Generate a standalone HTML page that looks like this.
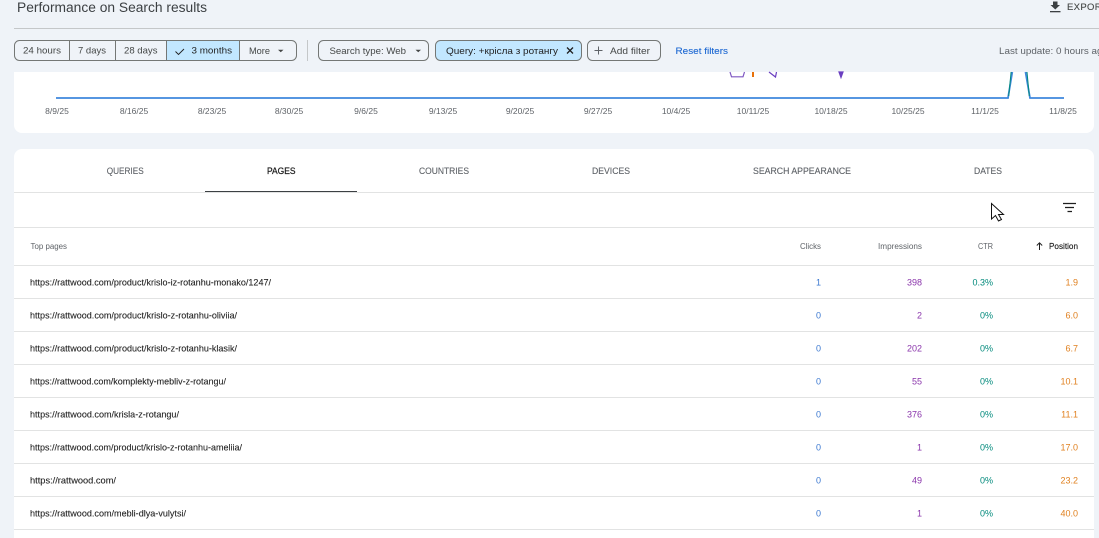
<!DOCTYPE html>
<html lang="en">
<head>
<meta charset="utf-8">
<title>Performance on Search results</title>
<style>
html,body{margin:0;padding:0;width:1099px;height:538px;overflow:hidden;background:#eff3f8}
svg{display:block}
text{font-family:"Liberation Sans","Noto Sans CJK SC",sans-serif}
.b{font-size:9.5px;fill:#444746}
.d{font-size:8.5px;fill:#5f6368;text-anchor:middle}
.t{font-size:8.8px;fill:#5f6368;stroke:#5f6368;stroke-width:.12}
.u{font-size:9.5px;fill:#1f1f1f;stroke:#1f1f1f;stroke-width:.1}
.h{font-size:8px;fill:#5f6368}
.c{font-size:9px;fill:#3b78d0;text-anchor:end}
.i{font-size:9px;fill:#8a35ab;text-anchor:end}
.r{font-size:9px;fill:#00897b;text-anchor:end}
.p{font-size:9px;fill:#e0801f;text-anchor:end}
.l{stroke:#e2e3e3;stroke-width:1}
</style>
</head>
<body>
<svg width="1099" height="538" viewBox="0 0 1099 538" xmlns="http://www.w3.org/2000/svg">
<rect width="1099" height="538" fill="#eff3f8"/>

<!-- header -->
<text x="17" y="12" font-size="13.5" fill="#3c4043" textLength="190" lengthAdjust="spacingAndGlyphs">Performance on Search results</text>
<path d="M1053 1.500h4.500v3.500h2.500l-4.750 4.500-4.750-4.500h2.500z" fill="#3c4043"/>
<rect x="1050" y="11" width="10.500" height="1.300" fill="#3c4043"/>
<text x="1067" y="10" font-size="9.500" fill="#444746" letter-spacing=".35" stroke="#444746" stroke-width=".12">EXPORT</text>
<rect x="14" y="28" width="1085" height="1" fill="#c4c7c9"/>

<!-- date range group -->
<path d="M167 40.500h72.500v20H167z" fill="#c2e7ff"/>
<rect x="14.500" y="40.500" width="282" height="20" rx="5" fill="none" stroke="#747775"/>
<path d="M69.500 40.500v20M115.500 40.500v20M166.500 40.500v20M239.500 40.500v20" stroke="#747775" fill="none"/>
<text class="b" x="23" y="53.500" textLength="38" lengthAdjust="spacingAndGlyphs">24 hours</text>
<text class="b" x="78" y="53.500" textLength="28" lengthAdjust="spacingAndGlyphs">7 days</text>
<text class="b" x="124" y="53.500" textLength="33.500" lengthAdjust="spacingAndGlyphs">28 days</text>
<path d="M175.500 51.500l3 3 5.500-5.500" fill="none" stroke="#1f1f1f" stroke-width=".9"/>
<text class="b" x="191.500" y="53.500" textLength="40.500" lengthAdjust="spacingAndGlyphs" style="fill:#1f1f1f">3 months</text>
<text class="b" x="249" y="54" textLength="21" lengthAdjust="spacingAndGlyphs">More</text>
<path d="M278 49.700h5.500l-2.750 2.500z" fill="#444746"/>

<rect x="307" y="40" width="1" height="21" fill="#c4c7c9"/>

<!-- filters -->
<rect x="318.500" y="40.500" width="110" height="20" rx="5" fill="none" stroke="#747775"/>
<text class="b" x="329.500" y="54" textLength="76.500" lengthAdjust="spacingAndGlyphs">Search type: Web</text>
<path d="M415.500 49.700h5.500l-2.750 2.500z" fill="#444746"/>

<rect x="435.500" y="40.500" width="146" height="20" rx="5" fill="#c2e7ff" stroke="#747775"/>
<text class="b" x="446" y="54" textLength="112" lengthAdjust="spacingAndGlyphs" style="fill:#1f1f1f">Query: +крісла з ротангу</text>
<path d="M567 47.500l6 6M573 47.500l-6 6" stroke="#1f1f1f" stroke-width="1.300" fill="none"/>

<rect x="587.500" y="40.500" width="73" height="20" rx="5" fill="none" stroke="#747775"/>
<path d="M598.500 46.500v8M594.500 50.500h8" stroke="#5f6368" stroke-width="1" fill="none"/>
<text class="b" x="610" y="54" textLength="40" lengthAdjust="spacingAndGlyphs">Add filter</text>
<text x="675.500" y="54" font-size="9.500" fill="#1a66d2" stroke="#1a66d2" stroke-width=".1" textLength="52.500" lengthAdjust="spacingAndGlyphs">Reset filters</text>
<text x="999" y="54" font-size="9.500" fill="#5f6368" textLength="109" lengthAdjust="spacingAndGlyphs">Last update: 0 hours ago</text>

<!-- chart card -->
<path d="M14 72H1094V125a8 8 0 0 1-8 8H22a8 8 0 0 1-8-8z" fill="#fff"/>
<g fill="none" stroke-width="1.200">
<path d="M730 72l1.500 4.800h11.500l1.500-4.800" stroke="#7e57c2"/>
<path d="M769 72l6.500 5 1-5" stroke="#6a3fc0"/>
<path d="M839 72l2 5.500 2-5.500z" stroke="#6a3fc0" fill="#6a3fc0"/>
</g>
<rect x="752" y="72" width="2" height="5" fill="#e8710a"/>
<path d="M56 98H1008l4.300-26M1025.500 72l4.500 26H1064" fill="none" stroke="#3f88dd" stroke-width="1.800"/>
<path d="M1008.700 96l2.400-24M1027 72l2.300 24" fill="none" stroke="#00897b" stroke-width="1"/>
<g class="dates">
<text class="d" x="57" y="114">8/9/25</text>
<text class="d" x="134" y="114">8/16/25</text>
<text class="d" x="212" y="114">8/23/25</text>
<text class="d" x="289" y="114">8/30/25</text>
<text class="d" x="366" y="114">9/6/25</text>
<text class="d" x="443" y="114">9/13/25</text>
<text class="d" x="520" y="114">9/20/25</text>
<text class="d" x="598" y="114">9/27/25</text>
<text class="d" x="676" y="114">10/4/25</text>
<text class="d" x="753" y="114">10/11/25</text>
<text class="d" x="831" y="114">10/18/25</text>
<text class="d" x="908" y="114">10/25/25</text>
<text class="d" x="985" y="114">11/1/25</text>
<text class="d" x="1063" y="114">11/8/25</text>
</g>

<!-- table card -->
<path d="M14 157a8 8 0 0 1 8-8H1086a8 8 0 0 1 8 8V538H14z" fill="#fff"/>

<text class="t" x="106.700" y="174" textLength="37" lengthAdjust="spacingAndGlyphs">QUERIES</text>
<text class="t" x="267" y="174" textLength="28.500" lengthAdjust="spacingAndGlyphs" style="fill:#1f1f1f;stroke:#1f1f1f;stroke-width:.25">PAGES</text>
<text class="t" x="419" y="174" textLength="50" lengthAdjust="spacingAndGlyphs">COUNTRIES</text>
<text class="t" x="592" y="174" textLength="38" lengthAdjust="spacingAndGlyphs">DEVICES</text>
<text class="t" x="753" y="174" textLength="98" lengthAdjust="spacingAndGlyphs">SEARCH APPEARANCE</text>
<text class="t" x="974" y="174" textLength="28" lengthAdjust="spacingAndGlyphs">DATES</text>

<path class="l" d="M14 192.500H1094M14 227.500H1094M14 265.500H1094M14 298.500H1094M14 331.500H1094M14 364.500H1094M14 397.500H1094M14 430.500H1094M14 463.500H1094M14 496.500H1094M14 529.500H1094"/>
<rect x="205" y="191" width="152" height="1" fill="#3c4043"/>

<!-- toolbar icons -->
<path d="M1063 203.500h13M1065 207.500h9M1067.500 211.500h4.500" stroke="#1f1f1f" stroke-width="1.300" fill="none"/>
<path d="M991.500 203.500V219l4-3.500 3 5.500 3-1.500-3-5h5z" fill="#fff" stroke="#111" stroke-width="1"/>

<!-- table head -->
<text class="h" x="30.500" y="249" textLength="36.500" lengthAdjust="spacingAndGlyphs">Top pages</text>
<text class="h" x="800" y="249" textLength="21" lengthAdjust="spacingAndGlyphs">Clicks</text>
<text class="h" x="878" y="249" textLength="44" lengthAdjust="spacingAndGlyphs">Impressions</text>
<text class="h" x="978" y="249" textLength="15" lengthAdjust="spacingAndGlyphs">CTR</text>
<path d="M1039.500 250v-7M1036.800 245.500l2.700-2.700 2.700 2.700" fill="none" stroke="#1f1f1f" stroke-width="1"/>
<text class="h" x="1049" y="249" textLength="29" lengthAdjust="spacingAndGlyphs" style="fill:#1f1f1f;stroke:#1f1f1f;stroke-width:.15">Position</text>

<!-- rows -->
<text class="u" x="30" y="285.500" textLength="241" lengthAdjust="spacingAndGlyphs">https://rattwood.com/product/krislo-iz-rotanhu-monako/1247/</text>
<text class="c" x="821" y="285.500">1</text><text class="i" x="922" y="285.500">398</text><text class="r" x="993" y="285.500">0.3%</text><text class="p" x="1078" y="285.500">1.9</text>

<text class="u" x="30" y="318.500" textLength="207" lengthAdjust="spacingAndGlyphs">https://rattwood.com/product/krislo-z-rotanhu-oliviia/</text>
<text class="c" x="821" y="318.500">0</text><text class="i" x="922" y="318.500">2</text><text class="r" x="993" y="318.500">0%</text><text class="p" x="1078" y="318.500">6.0</text>

<text class="u" x="30" y="351.500" textLength="207" lengthAdjust="spacingAndGlyphs">https://rattwood.com/product/krislo-z-rotanhu-klasik/</text>
<text class="c" x="821" y="351.500">0</text><text class="i" x="922" y="351.500">202</text><text class="r" x="993" y="351.500">0%</text><text class="p" x="1078" y="351.500">6.7</text>

<text class="u" x="30" y="384.500" textLength="196" lengthAdjust="spacingAndGlyphs">https://rattwood.com/komplekty-mebliv-z-rotangu/</text>
<text class="c" x="821" y="384.500">0</text><text class="i" x="922" y="384.500">55</text><text class="r" x="993" y="384.500">0%</text><text class="p" x="1078" y="384.500">10.1</text>

<text class="u" x="30" y="417.500" textLength="149" lengthAdjust="spacingAndGlyphs">https://rattwood.com/krisla-z-rotangu/</text>
<text class="c" x="821" y="417.500">0</text><text class="i" x="922" y="417.500">376</text><text class="r" x="993" y="417.500">0%</text><text class="p" x="1078" y="417.500">11.1</text>

<text class="u" x="30" y="450.500" textLength="212" lengthAdjust="spacingAndGlyphs">https://rattwood.com/product/krislo-z-rotanhu-ameliia/</text>
<text class="c" x="821" y="450.500">0</text><text class="i" x="922" y="450.500">1</text><text class="r" x="993" y="450.500">0%</text><text class="p" x="1078" y="450.500">17.0</text>

<text class="u" x="30" y="483.500" textLength="86" lengthAdjust="spacingAndGlyphs">https://rattwood.com/</text>
<text class="c" x="821" y="483.500">0</text><text class="i" x="922" y="483.500">49</text><text class="r" x="993" y="483.500">0%</text><text class="p" x="1078" y="483.500">23.2</text>

<text class="u" x="30" y="516.500" textLength="156" lengthAdjust="spacingAndGlyphs">https://rattwood.com/mebli-dlya-vulytsi/</text>
<text class="c" x="821" y="516.500">0</text><text class="i" x="922" y="516.500">1</text><text class="r" x="993" y="516.500">0%</text><text class="p" x="1078" y="516.500">40.0</text>
</svg>
</body>
</html>
